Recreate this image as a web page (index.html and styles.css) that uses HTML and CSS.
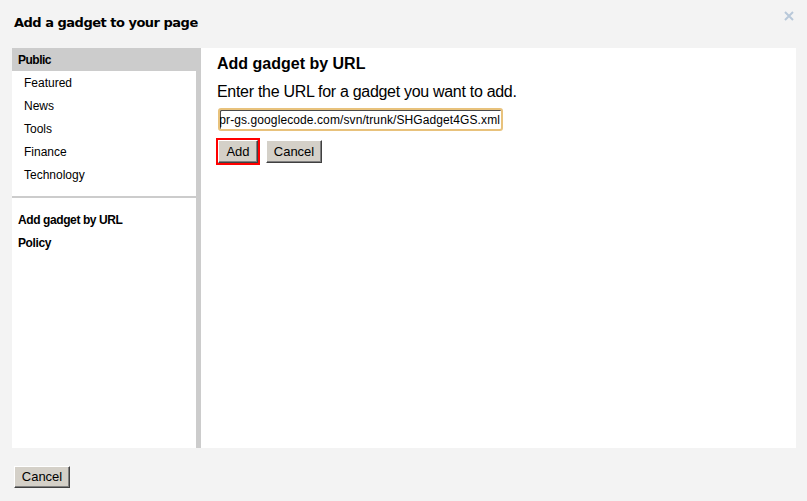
FILE: index.html
```html
<!DOCTYPE html>
<html>
<head>
<meta charset="utf-8">
<link rel="stylesheet" href="styles.css">
</head>
<body>
<div class="dialog">
  <div class="titlebar">
    <h1 class="title">Add a gadget to your page</h1>
    <svg class="close" width="10" height="10" viewBox="0 0 10 10"><path d="M1 1 L9 9 M9 1 L1 9" stroke="#b8c8d9" stroke-width="2"/></svg>
  </div>
  <div class="main">
    <nav class="nav">
      <div class="nav-head">Public</div>
      <div class="nav-item">Featured</div>
      <div class="nav-item">News</div>
      <div class="nav-item">Tools</div>
      <div class="nav-item">Finance</div>
      <div class="nav-item">Technology</div>
      <div class="nav-divider"></div>
      <div class="nav-link">Add gadget by URL</div>
      <div class="nav-link">Policy</div>
    </nav>
    <section class="panel">
      <h2 class="panel-title">Add gadget by URL</h2>
      <p class="panel-text">Enter the URL for a gadget you want to add.</p>
      <div class="url-input"><span class="url-text">http://sharepoint-helpr-gs.googlecode.com/svn/trunk/SHGadget4GS.xml</span></div>
      <div class="actions">
        <div class="focus-ring"><button class="btn btn-add">Add</button></div>
        <button class="btn btn-cancel">Cancel</button>
      </div>
    </section>
  </div>
  <div class="footer">
    <button class="btn btn-cancel">Cancel</button>
  </div>
</div>
</body>
</html>
```

FILE: styles.css
```css
* { box-sizing: border-box; }
html, body { margin: 0; padding: 0; }
body {
  background: #f3f3f3;
  font-family: "Liberation Sans", Arial, sans-serif;
  color: #000;
  width: 807px;
  height: 501px;
  overflow: hidden;
}
.dialog { display: flex; flex-direction: column; }
.titlebar {
  height: 48px;
  display: flex;
  align-items: flex-start;
  justify-content: space-between;
  padding: 15px 13px 0 14px;
}
.title {
  margin: 0;
  font-family: "DejaVu Sans", Verdana, sans-serif;
  font-weight: bold;
  font-size: 13px;
  line-height: 16px;
  letter-spacing: -0.5px;
}
.close { margin-top: -4px; }
.main {
  margin: 0 11px 0 12px;
  height: 400px;
  background: #fff;
  display: flex;
}
.nav {
  width: 189px;
  border-right: 5px solid #ccc;
  display: flex;
  flex-direction: column;
}
.nav-head {
  background: #ccc;
  height: 23px;
  line-height: 22px;
  padding-top: 1px;
  margin-right: -5px;
  padding-left: 6px;
  font-weight: bold;
  font-size: 12px;
  letter-spacing: -0.5px;
}
.nav-item {
  height: 23px;
  line-height: 22px;
  padding-top: 1px;
  padding-left: 12px;
  font-size: 12px;
}
.nav-divider {
  height: 2px;
  background: #ccc;
  margin: 10px 0 10px;
}
.nav-link {
  height: 23px;
  line-height: 22px;
  padding-top: 1px;
  padding-left: 6px;
  font-weight: bold;
  font-size: 12px;
  letter-spacing: -0.4px;
}
.panel {
  flex: 1;
  padding: 6px 0 0 16px;
}
.panel-title {
  margin: 0;
  font-size: 16px;
  line-height: 20px;
  font-weight: bold;
}
.panel-text {
  margin: 8px 0 0;
  font-size: 16px;
  line-height: 20px;
  letter-spacing: -0.3px;
}
.url-input {
  margin: 6px 0 0 1px;
  width: 285px;
  height: 23px;
  border: 2px solid #e8c27c;
  border-radius: 3px;
  box-shadow: inset 1px 1px 0 #4a4a4a;
  background: #fff;
  display: flex;
  justify-content: flex-end;
  align-items: center;
  overflow: hidden;
  padding: 0 1px 0 2px;
}
.url-text {
  white-space: nowrap;
  font-size: 12px;
  letter-spacing: 0.1px;
  flex-shrink: 0;
}
.actions {
  margin: 7px 0 0 -1px;
  display: flex;
  align-items: center;
  gap: 6px;
}
.actions .btn { height: 23px; }
.focus-ring {
  border: 2px solid #f00;
  display: flex;
}
.btn {
  height: 22px;
  padding: 0;
  background: #d4d0c8;
  border: 1px solid;
  border-color: #fff #404040 #404040 #fff;
  box-shadow: inset -1px -1px 0 #808080;
  font-family: "Liberation Sans", Arial, sans-serif;
  font-size: 13px;
  color: #000;
  line-height: 20px;
}
.btn-add { width: 40px; }
.btn-cancel { width: 56px; }
.footer {
  padding: 18px 0 0 14px;
}
```
